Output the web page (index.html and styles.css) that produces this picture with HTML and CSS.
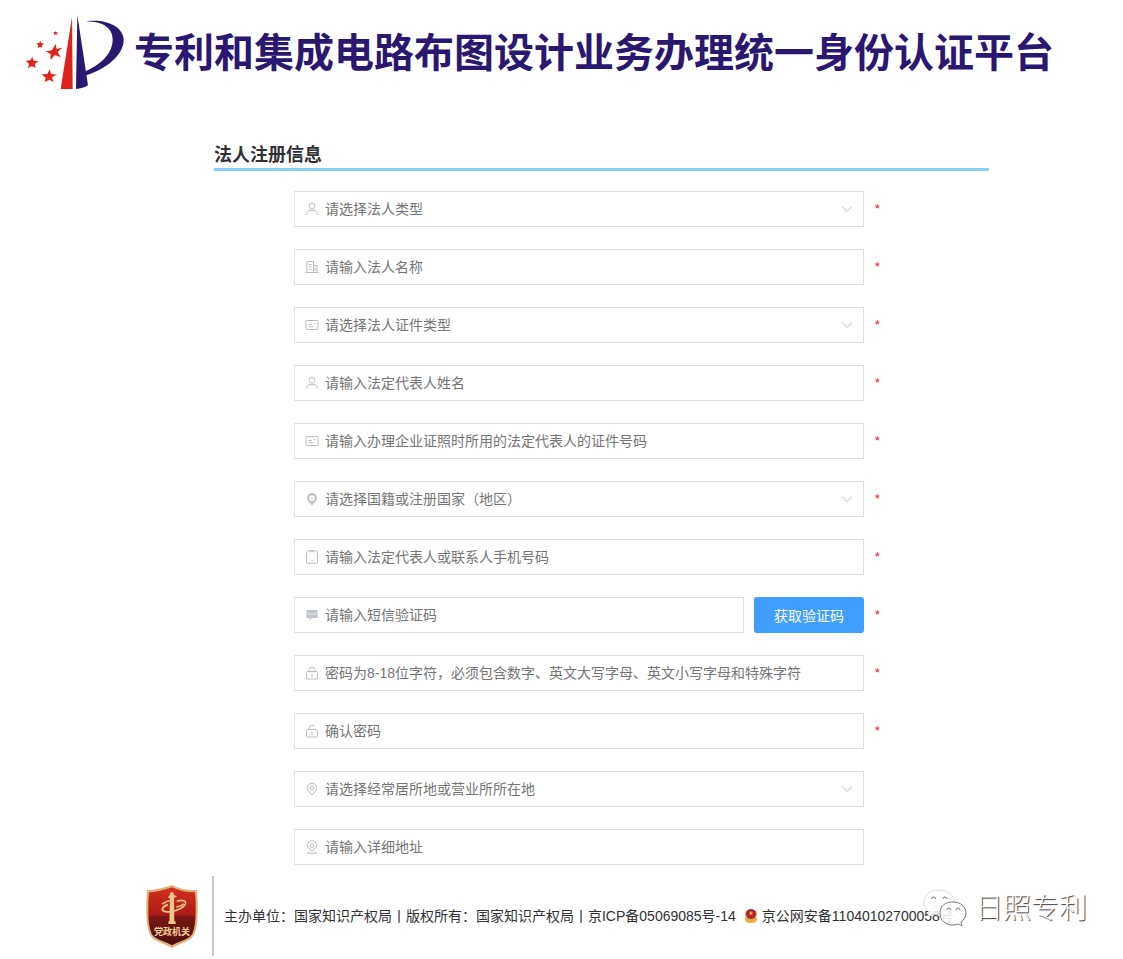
FILE: index.html
```html
<!DOCTYPE html>
<html lang="zh-CN">
<head>
  <meta charset="UTF-8">
  <meta name="viewport" content="width=device-width, initial-scale=1.0">
  <title>法人注册信息</title>
  <link rel="stylesheet" href="styles.css">
</head>
<body>
  <!-- 公共图标 -->
  <svg class="sprite" aria-hidden="true">
    <symbol id="i-user" viewBox="0 0 14 14">
      <circle cx="7" cy="4.2" r="3"/>
      <path d="M1.700 13v-1.200c0-2 1.500-3.200 3.300-3.200h4c1.800 0 3.300 1.200 3.300 3.200V13"/>
    </symbol>
    <symbol id="i-office" viewBox="0 0 14 14">
      <path d="M2 12.500V1.500h6.500v11M8.500 5.500h3.500v7M.8 12.500h12.400M4 4.500h2.500M4 7h2.500M4 9.500h2.500M10.300 7.500v3"/>
    </symbol>
    <symbol id="i-card" viewBox="0 0 14 14">
      <rect x="1" y="2.500" width="12" height="9" rx="1"/>
      <path d="M3.500 6.500h3.500M3.500 8.700h5M9 5.500h1.500"/>
    </symbol>
    <symbol id="i-place" viewBox="0 0 14 14">
      <path class="solid" fill-rule="evenodd" d="M7 1a5 5 0 0 0-5 5c0 3 2.500 4.800 5 7.500 2.500-2.700 5-4.500 5-7.500a5 5 0 0 0-5-5zm0 2.300a2.700 2.700 0 1 1 0 5.400 2.700 2.700 0 0 1 0-5.400z"/>
      <circle class="solid" cx="7" cy="6" r="1"/>
    </symbol>
    <symbol id="i-phone" viewBox="0 0 14 14">
      <rect x="1.500" y=".7" width="11" height="12.500" rx="1"/>
      <path d="M4.500 1.700h5M6.300 10.500h1.500"/>
    </symbol>
    <symbol id="i-msg" viewBox="0 0 14 14">
      <path class="solid" fill-rule="evenodd" d="M1.500 2h11v8H7l-2.500 2.500V10h-3zM3.600 5.500v1.200h1.200V5.500zm2.800 0v1.200h1.200V5.500zm2.800 0v1.200h1.200V5.500z"/>
    </symbol>
    <symbol id="i-lock" viewBox="0 0 14 14">
      <rect x="1.500" y="5.500" width="11" height="7.500" rx="1"/>
      <path d="M4 5.500V4a3 3 0 0 1 6 0v1.500M7 8v3"/>
    </symbol>
    <symbol id="i-unlock" viewBox="0 0 14 14">
      <rect x="1.500" y="5.500" width="11" height="7.500" rx="1"/>
      <path d="M4 5.500V4a3 3 0 0 1 5.600-1.400M7 8v3"/>
    </symbol>
    <symbol id="i-pin" viewBox="0 0 14 14">
      <path d="M7 1.200a4.800 4.800 0 0 0-4.800 4.800c0 2.600 2.300 4.500 4.800 7 2.500-2.500 4.800-4.400 4.800-7A4.800 4.800 0 0 0 7 1.200z"/>
      <circle cx="7" cy="6" r="1.800"/>
    </symbol>
    <symbol id="i-address" viewBox="0 0 14 14">
      <path d="M7 .8a4.600 4.600 0 0 0-4.600 4.600c0 2.500 2.300 3.700 4.600 6 2.300-2.300 4.600-3.500 4.600-6A4.600 4.600 0 0 0 7 .8zM4 11.300l-1.500 1.900h9L10 11.300"/>
      <circle cx="7" cy="5.500" r="1.800"/>
    </symbol>
    <symbol id="i-arrow" viewBox="0 0 14 14">
      <path d="M2 4.500l5 5 5-5"/>
    </symbol>
  </svg>

  <header class="header">
    <svg class="logo" viewBox="45 27 300 231" aria-hidden="true">
      <g fill="#dc241c">
        <path d="M186 36l2 216h-36z"/>
        <path d="M136 78l2 4 6-1-4 4 2 5-5-2-5 3 1-6-4-3 6-1z"/>
        <path d="M92 108l2 7 9 1-7 5 1 8-6-4-8 4 2-8-6-6 9-1z"/>
        <path d="M137 117l3 15 17-4-14 13 9 16-17-7-14 15 1-18-15-8 19-3z"/>
        <path d="M67 155l4 12 15 1-12 9 3 12-11-6-12 6 3-13-10-9 14-1z"/>
        <path d="M119 193l4 14 17 2-14 8 5 14-14-7-13 8 3-14-12-10 17-1z"/>
      </g>
      <g fill="#2a176f">
        <path d="M202 30l32 211q-15 10-36 11z"/>
        <path d="M228 49c65-8 113 18 113 57 0 43-52 87-112 105l-2-13c45-18 81-54 81-94 0-35-28-54-80-55z"/>
      </g>
    </svg>
    <h1>专利和集成电路布图设计业务办理统一身份认证平台</h1>
  </header>

  <main class="register">
    <h2>法人注册信息</h2>
    <form class="form">
      <div class="row">
        <div class="field">
          <label for="corpType"><svg class="icon"><use href="#i-user"/></svg></label>
          <select id="corpType" aria-label="法人类型" required><option value="">请选择法人类型</option></select>
          <svg class="icon arrow"><use href="#i-arrow"/></svg>
        </div>
        <span class="star">*</span>
      </div>
      <div class="row">
        <div class="field">
          <label for="corpName"><svg class="icon"><use href="#i-office"/></svg></label>
          <input type="text" id="corpName" aria-label="法人名称" placeholder="请输入法人名称" required>
        </div>
        <span class="star">*</span>
      </div>
      <div class="row">
        <div class="field">
          <label for="cardType"><svg class="icon"><use href="#i-card"/></svg></label>
          <select id="cardType" aria-label="法人证件类型" required><option value="">请选择法人证件类型</option></select>
          <svg class="icon arrow"><use href="#i-arrow"/></svg>
        </div>
        <span class="star">*</span>
      </div>
      <div class="row">
        <div class="field">
          <label for="legalName"><svg class="icon"><use href="#i-user"/></svg></label>
          <input type="text" id="legalName" aria-label="法定代表人姓名" placeholder="请输入法定代表人姓名" required>
        </div>
        <span class="star">*</span>
      </div>
      <div class="row">
        <div class="field">
          <label for="cardNo"><svg class="icon"><use href="#i-card"/></svg></label>
          <input type="text" id="cardNo" aria-label="证件号码" placeholder="请输入办理企业证照时所用的法定代表人的证件号码" required>
        </div>
        <span class="star">*</span>
      </div>
      <div class="row">
        <div class="field">
          <label for="country"><svg class="icon"><use href="#i-place"/></svg></label>
          <select id="country" aria-label="国籍或注册国家（地区）" required><option value="">请选择国籍或注册国家（地区）</option></select>
          <svg class="icon arrow"><use href="#i-arrow"/></svg>
        </div>
        <span class="star">*</span>
      </div>
      <div class="row">
        <div class="field">
          <label for="phone"><svg class="icon"><use href="#i-phone"/></svg></label>
          <input type="tel" id="phone" aria-label="手机号码" placeholder="请输入法定代表人或联系人手机号码" required>
        </div>
        <span class="star">*</span>
      </div>
      <div class="row">
        <div class="field">
          <label for="smsCode"><svg class="icon"><use href="#i-msg"/></svg></label>
          <input type="text" id="smsCode" aria-label="短信验证码" placeholder="请输入短信验证码" required>
        </div>
        <button type="button" class="btn">获取验证码</button>
        <span class="star">*</span>
      </div>
      <div class="row">
        <div class="field">
          <label for="password"><svg class="icon"><use href="#i-lock"/></svg></label>
          <input type="password" id="password" aria-label="密码" placeholder="密码为8-18位字符，必须包含数字、英文大写字母、英文小写字母和特殊字符" required>
        </div>
        <span class="star">*</span>
      </div>
      <div class="row">
        <div class="field">
          <label for="password2"><svg class="icon"><use href="#i-unlock"/></svg></label>
          <input type="password" id="password2" aria-label="确认密码" placeholder="确认密码" required>
        </div>
        <span class="star">*</span>
      </div>
      <div class="row">
        <div class="field">
          <label for="area"><svg class="icon"><use href="#i-pin"/></svg></label>
          <select id="area" aria-label="经常居所地或营业所所在地"><option value="">请选择经常居所地或营业所所在地</option></select>
          <svg class="icon arrow"><use href="#i-arrow"/></svg>
        </div>
        <span class="star"></span>
      </div>
      <div class="row">
        <div class="field">
          <label for="address"><svg class="icon"><use href="#i-address"/></svg></label>
          <input type="text" id="address" aria-label="详细地址" placeholder="请输入详细地址">
        </div>
        <span class="star"></span>
      </div>
    </form>
  </main>

  <footer class="footer">
    <div class="badge">
      <svg viewBox="33 42 156 189" role="img" aria-label="党政机关">
        <defs>
          <linearGradient id="red" x1="0" y1="0" x2="0" y2="1">
            <stop offset="0" stop-color="#d5301f"/>
            <stop offset=".48" stop-color="#a91c16"/>
            <stop offset=".5" stop-color="#7c1512"/>
            <stop offset="1" stop-color="#4a100d"/>
          </linearGradient>
        </defs>
        <path fill="#dfb27a" d="M111 42c22 12 48 16 75 15q3 32 2 70-1 42-10 63-6 14-27 23-24 9-40 18-16-9-40-18-21-9-27-23-9-21-10-63-1-38 2-70 27 1 75-15z"/>
        <path fill="url(#red)" d="M111 49c22 11 46 15 69 15q3 30 2 64-1 38-9 58-5 12-24 20-22 8-38 17-16-9-38-17-19-8-24-20-8-20-9-58-1-34 2-64 26 0 69-15z"/>
        <g fill="#efc58b">
          <path d="M107 64h8l2 8 9 4-9 6 1 76h-15l2-76-7-2 5-6z"/>
          <path d="M100 151h22v8h-22z"/>
        </g>
        <g fill="none" stroke="#efc58b" stroke-width="5">
          <path d="M125 91c20-7 33 0 24 12-10 13-41 22-57 19-18-3-9-16 7-21"/>
          <path d="M82 99c10-8 21-11 30-12M124 108c12-2 20-6 21-10"/>
        </g>
        <text class="badge-text" x="57" y="191">党政机关</text>
      </svg>
    </div>
    <div class="copyright">
      <span>主办单位：国家知识产权局丨版权所有：国家知识产权局丨京ICP备05069085号-14</span>
      <svg class="police" viewBox="0 0 14 16" aria-hidden="true">
        <path fill="#f5b34b" d="M1 9l3 1h6l3-1v4l-3 2H4l-3-2z"/>
        <path fill="#f0a13b" d="M7 .5l5.500 2.500.5 4q-1 5-6 7-5-2-6-7l.5-4z"/>
        <circle cx="7" cy="6" r="4.800" fill="#33317a"/>
        <circle cx="7" cy="6" r="3.800" fill="#df1f1b"/>
        <path fill="#ffd23e" d="M7 3l.6 1.400h1.400L7.900 5.300 8.300 7 7 6 5.700 7l.4-1.700L5 4.400h1.400z"/>
      </svg>
      <span>京公网安备11040102700058号</span>
    </div>
    <div class="watermark">
      <svg viewBox="0 0 44 40" aria-hidden="true">
        <path class="bubble light" d="M16 1c9 0 15 5 15 12s-6 13-15 13q-3 0-6-1l-5 3 1-5C3 21 1 17 1 13 1 6 7 1 16 1z"/>
        <path class="bubble" d="M30 13c8 0 13 5 13 11 0 4-2 7-5 9l1 4-4-2q-2 1-5 1c-8 0-13-5-13-12s5-11 13-11z"/>
        <path class="eyes" d="M8.500 10q0-2 2-2t2 2M20 10q0-2 2-2t2 2M24 21q0-2 2-2t2 2M33 21q0-2 2-2t2 2"/>
      </svg>
      <span>日照专利</span>
    </div>
  </footer>
</body>
</html>
```
FILE: styles.css
```css
* {
  box-sizing: border-box;
}

body {
  margin: 0;
  background: #fff;
  color: #303133;
  font-family: "Liberation Sans", "Noto Sans CJK SC", sans-serif;
  font-size: 14px;
  line-height: 20px;
}

.sprite {
  display: none;
}

.header {
  display: flex;
  align-items: center;
  gap: 9px;
  padding: 14px 25px 0;
}

.header h1 {
  margin: 0;
  color: #2a176f;
  font-size: 40px;
  line-height: 60px;
  white-space: nowrap;
}

.logo {
  flex: none;
  width: 100px;
  height: 77px;
}

.register {
  margin: 52px 134px 0 214px;
}

.register h2 {
  margin: 0;
  padding-bottom: 1px;
  border-bottom: 3px solid #87cff3;
  font-size: 18px;
  line-height: 24px;
}

.form {
  display: flex;
  flex-direction: column;
  gap: 22px;
  padding: 20px 100px 0 80px;
}

.row {
  display: flex;
}

.field {
  position: relative;
  flex: 1;
}

.field label {
  position: absolute;
  top: 11px;
  left: 11px;
  height: 14px;
}

.icon {
  display: block;
  width: 14px;
  height: 14px;
  fill: none;
  stroke: #b8bcc6;
  stroke-width: 1;
}

.solid {
  fill: #c0c4cc;
  stroke: none;
}

.arrow {
  position: absolute;
  top: 11px;
  right: 10px;
  pointer-events: none;
}

input,
select {
  display: block;
  width: 100%;
  height: 36px;
  padding: 0 30px;
  border: 1px solid #dcdfe6;
  border-radius: 0;
  background: #fff;
  color: #757575;
  font-family: inherit;
  font-size: 14px;
  outline: none;
  appearance: none;
}

input::placeholder {
  color: #757575;
}

.btn {
  width: 110px;
  height: 36px;
  margin-left: 10px;
  padding: 0;
  border: none;
  border-radius: 3px;
  background: #409eff;
  color: #fff;
  font-family: inherit;
  font-size: 14px;
  cursor: pointer;
}

.star {
  width: 25px;
  padding-left: 11px;
  color: #f00;
  font-size: 12px;
  line-height: 36px;
}

.footer {
  position: relative;
  display: flex;
  align-items: center;
  margin-top: 11px;
  padding-left: 13%;
}

.badge {
  display: flex;
  align-items: center;
  height: 80px;
  padding-right: 14px;
  border-right: 2px solid #c8c8c8;
}

.badge svg {
  width: 52px;
  height: 63px;
}

.badge-text {
  fill: #f3cf9c;
  font-size: 27px;
  font-weight: bold;
}

.copyright {
  display: flex;
  align-items: center;
  padding-left: 10px;
  white-space: nowrap;
}

.police {
  width: 14px;
  height: 16px;
  margin: 0 4px 0 8px;
}

.watermark {
  position: absolute;
  top: 13px;
  right: 36px;
  display: flex;
  align-items: center;
  gap: 8px;
  color: #fff;
  font-size: 28px;
  font-weight: 300;
  line-height: 40px;
  text-shadow: 1px 1px 1px #333;
}

.watermark svg {
  width: 44px;
  height: 40px;
}

.bubble {
  fill: #fff;
  fill-opacity: 0.85;
  stroke: #777;
  stroke-width: 1;
}

.bubble.light {
  stroke: #ddd;
}

.eyes {
  fill: none;
  stroke: #777;
}
```
